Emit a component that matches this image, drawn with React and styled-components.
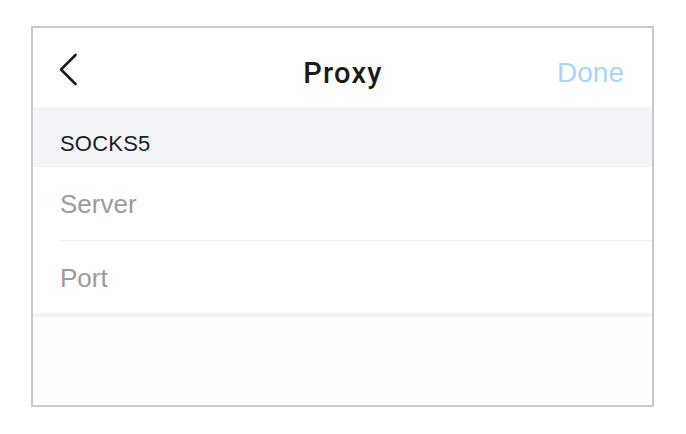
import React from "react";
import styled, { createGlobalStyle } from "styled-components";

const Global = createGlobalStyle`
  html, body { margin: 0; padding: 0; background: #ffffff; }
  body { font-family: "Liberation Sans", Arial, sans-serif; }
`;

const Frame = styled.div`
  box-sizing: border-box;
  margin: 26px 0 0 31px;
  width: 623px;
  height: 381px;
  border: 2px solid #c9c9c9;
  background: #fefefe;
  display: flex;
  flex-direction: column;
`;

const Header = styled.div`
  box-sizing: border-box;
  height: 79px;
  display: grid;
  grid-template-columns: 1fr auto 1fr;
  align-items: center;
  background: #ffffff;
  padding: 10px 28px 0 25px;
`;

const BackButton = styled.button`
  justify-self: start;
  background: none;
  border: 0;
  padding: 0;
  display: flex;
  align-items: center;
  margin-top: -6px;
`;

const Title = styled.div`
  font-family: Roboto, "Liberation Sans", sans-serif;
  font-size: 29px;
  font-weight: 500;
  color: #1b1b1b;
  letter-spacing: 1.2px;
  margin-left: 4px;
`;

const Done = styled.div`
  justify-self: end;
  font-size: 28px;
  color: #a9d5fb;
`;

const SectionLabel = styled.div`
  box-sizing: border-box;
  height: 60px;
  background: #f3f4f7;
  display: flex;
  align-items: center;
  padding: 13px 0 0 27px;
  font-size: 22px;
  color: #1e1e1e;
  letter-spacing: 0.2px;
`;

const List = styled.div`
  background: #ffffff;
  border-bottom: 4px solid #f3f3f7;
`;

const Row = styled.div`
  height: 73px;
  margin-left: 27px;
  display: flex;
  align-items: center;
  box-sizing: border-box;
  font-size: 26px;
  color: #9c9c9c;
  border-top: ${(p) => (p.$divider ? "1px solid #efeff3" : "none")};
  padding-top: 2px;
`;

const Chevron = () => (
  <svg width="20" height="33" viewBox="0 0 20 33" fill="none">
    <path d="M17.5 2 L3 16.5 L17.5 31" stroke="#1b1b1b" strokeWidth="2.6" strokeLinecap="round" strokeLinejoin="round" />
  </svg>
);

export default function App() {
  return (
    <>
      <Global />
      <Frame>
        <Header>
          <BackButton aria-label="Back">
            <Chevron />
          </BackButton>
          <Title>Proxy</Title>
          <Done>Done</Done>
        </Header>
        <SectionLabel>SOCKS5</SectionLabel>
        <List>
          <Row>Server</Row>
          <Row $divider>Port</Row>
        </List>
      </Frame>
    </>
  );
}
